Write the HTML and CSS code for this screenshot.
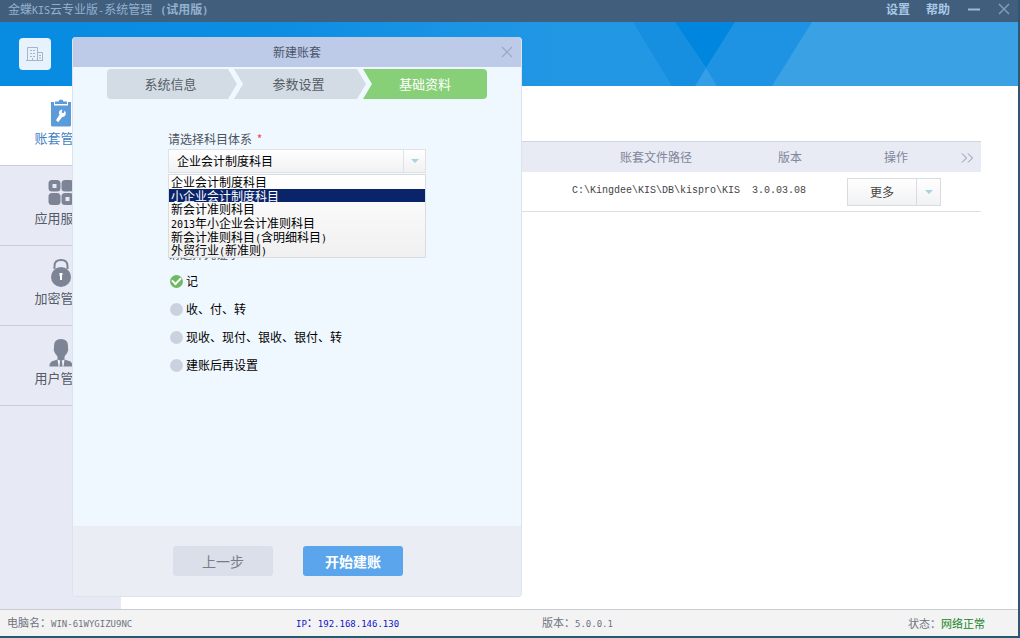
FILE: index.html
```html
<!DOCTYPE html>
<html lang="zh-CN">
<head>
<meta charset="utf-8">
<title>金蝶KIS云专业版-系统管理</title>
<link rel="stylesheet" href="styles.css">
</head>
<body>
<div class="app">
  <header class="titlebar">
    <h1 class="app-title">金蝶<span class="half">KIS</span>云专业版<span class="half">-</span>系统管理</h1>
    <span class="trial"><span class="half">(</span>试用版<span class="half">)</span></span>
    <nav class="window-menu">
      <button class="menu-btn" type="button">设置</button>
      <button class="menu-btn" type="button">帮助</button>
      <button class="win-btn" type="button" aria-label="最小化"><svg width="12" height="12" viewBox="0 0 12 12"><path d="M0 6.5h12" stroke="#9bbbd9" stroke-width="2"/></svg></button>
      <button class="win-btn" type="button" aria-label="关闭"><svg width="12" height="12" viewBox="0 0 12 12"><path d="M1 1l10 10M11 1L1 11" stroke="#7f9cb8" stroke-width="1.5"/></svg></button>
    </nav>
  </header>

  <div class="banner">
    <svg class="banner-art" viewBox="0 0 1018 64" preserveAspectRatio="none" aria-hidden="true">
      <defs><linearGradient id="sky"><stop offset="0" stop-color="#078ce2"/><stop offset=".25" stop-color="#0b8de2"/><stop offset=".55" stop-color="#2297e4"/></linearGradient></defs>
      <rect width="1018" height="64" fill="url(#sky)"/>
      <path d="M633 0H675L717 64H672z" fill="#168fe1"/>
      <path d="M675 0H735L706 46z" fill="#0086df"/>
      <path d="M735 0H812L772 64H717L706 46z" fill="#1e93e3"/>
      <path d="M706 46L717 64H695z" fill="#349fe6"/>
      <path d="M812 0H1018V64H772z" fill="#3aa1e5"/>
    </svg>
    <div class="logo">
      <svg width="18" height="16" viewBox="0 0 18 16" fill="none" stroke="#a3b4cb"><path d="M1.500 14.500V1.500h10v13M11.500 6.500h5v8M0 14.500h17"/><path d="M4 4.500h2m1 0h2M4 7.500h2m1 0h2M4 10.500h2m1 0h2M13 9.500h2M13 12h2M6.500 12v3"/></svg>
    </div>
  </div>

  <div class="workspace">
    <nav class="sidebar">
      <a class="side-item active" href="#accounts">
        <svg width="22" height="28" viewBox="0 0 22 28"><path d="M1 3H4v3.500h14V3h3v23q0 1.500-1.500 1.500H2.500Q1 27.500 1 26z" fill="#5b9bd9"/><path d="M5 5V2.500h3.500Q9 .5 11 .5t2.500 2H17V5z" fill="#5b9bd9"/><path d="M14.800 11.500l-1.300 2.800-2-.8.900-3c-2.900.2-4.200 2.800-2.900 5L6 21.200l2.200 2 4-5.200c3 .2 4.800-3.200 2.600-6.500z" fill="#fff"/></svg>
        <span>账套管理</span>
      </a>
      <a class="side-item" href="#services">
        <svg width="26" height="28" viewBox="0 0 26 28" fill="#7d8496"><path fill-rule="evenodd" d="M4 1h5q3.500 0 3.500 3.500V9q0 3.500-3.500 3.500H4Q.5 12.500.5 9V4.500Q.5 1 4 1zM4.500 5v4H8.500V5z"/><rect x="13.500" y="1" width="12" height="11.500" rx="3.500"/><rect x=".5" y="14" width="12" height="12" rx="3.500"/><path fill-rule="evenodd" d="M17 14h5q3.500 0 3.500 3.500V22.500q0 3.500-3.500 3.500h-5q-3.500 0-3.500-3.500v-5q0-3.500 3.500-3.500zM17.500 18v4h4v-4z"/></svg>
        <span>应用服务</span>
      </a>
      <a class="side-item" href="#encryption">
        <svg width="22" height="28" viewBox="0 0 22 28"><path d="M4.500 10V7q0-6 6.500-6t6.500 6v3" fill="none" stroke="#7d8496" stroke-width="2"/><circle cx="11" cy="18" r="10" fill="#7d8496"/><path d="M9.500 14h3v2h-.5v5h-2v-4h-.5z" fill="#fff"/></svg>
        <span>加密管理</span>
      </a>
      <a class="side-item" href="#users">
        <svg width="24" height="28" viewBox="0 0 24 28"><path d="M12 0q7 0 7 7v2.500q1 1-.5 3.500-.5 2-2 3l-1 2v2.500l6 2Q23.500 24 23.500 27.500H.5Q.5 24 2.500 22.500l6-2V18l-1-2q-1.500-1-2-3Q4 10.500 5 9.500V7Q5 0 12 0z" fill="#7d8496"/><path d="M8.500 20.500L12 22l3.500-1.500-1 7h-5z" fill="#f2f4fa"/><path d="M11 22h2l.5 5.500h-3z" fill="#7d8496"/></svg>
        <span>用户管理</span>
      </a>
    </nav>
    <main class="content">
      <table class="accounts">
        <colgroup><col><col class="c-path"><col class="c-version"><col class="c-action"><col class="c-next"></colgroup>
        <thead>
          <tr><th></th><th>账套文件路径</th><th>版本</th><th>操作</th><th><button class="next" type="button" aria-label="更多列"><svg width="12" height="10" viewBox="0 0 12 10" fill="none" stroke="#8990a6"><path d="M1 .5L5.500 5 1 9.500M7 .5L11.500 5 7 9.500"/></svg></button></th></tr>
        </thead>
        <tbody>
          <tr><td></td><td class="mono">C:\Kingdee\KIS\DB\kispro\KIS</td><td class="mono version">3.0.03.08</td>
          <td><div class="split"><button class="split-main" type="button">更多</button><button class="split-arrow" type="button" aria-label="展开"><i class="caret"></i></button></div></td><td></td></tr>
        </tbody>
      </table>
    </main>
  </div>

  <footer class="status">
    <span>电脑名：<span class="mono-s">WIN-61WYGIZU9NC</span></span>
    <span class="ip"><span class="mono-s">IP</span>：<span class="mono-s">192.168.146.130</span></span>
    <span>版本：<span class="mono-s">5.0.0.1</span></span>
    <span class="net">状态：<b>网络正常</b></span>
  </footer>

  <section class="dialog" role="dialog" aria-labelledby="dlg-title">
    <header class="dialog-head">
      <h2 id="dlg-title">新建账套</h2>
      <button class="dialog-close" type="button" aria-label="关闭"><svg width="12" height="12" viewBox="0 0 12 12"><path d="M1 1l10 10M11 1L1 11" stroke="#98a8cc" stroke-width="1.2"/></svg></button>
    </header>
    <div class="dialog-body">
      <ol class="steps">
        <li class="step first">系统信息</li>
        <li class="step middle">参数设置</li>
        <li class="step current">基础资料</li>
      </ol>
      <form class="form">
        <label class="field-label" for="subject">请选择科目体系 <span class="required">*</span></label>
        <div class="combo">
          <select id="subject"><option>企业会计制度科目</option></select>
          <span class="combo-arrow"><i class="caret"></i></span>
          <ul class="options" role="listbox" aria-label="科目体系">
            <li role="option">企业会计制度科目</li>
            <li role="option" class="selected" aria-selected="true">小企业会计制度科目</li>
            <li role="option">新会计准则科目</li>
            <li role="option"><span class="half">2013</span>年小企业会计准则科目</li>
            <li role="option">新会计准则科目<span class="half">(</span>含明细科目<span class="half">)</span></li>
            <li role="option">外贸行业<span class="half">(</span>新准则<span class="half">)</span></li>
          </ul>
        </div>
        <fieldset class="vouchers">
          <legend>请选择凭证字</legend>
          <label><input type="radio" name="voucher" checked>记</label>
          <label><input type="radio" name="voucher">收、付、转</label>
          <label><input type="radio" name="voucher">现收、现付、银收、银付、转</label>
          <label><input type="radio" name="voucher">建账后再设置</label>
        </fieldset>
      </form>
    </div>
    <footer class="dialog-foot">
      <button class="btn" type="button">上一步</button>
      <button class="btn primary" type="button">开始建账</button>
    </footer>
  </section>
</div>
</body>
</html>
```
FILE: styles.css
```css
* { box-sizing: border-box; }
body, h1, h2, ol, ul, fieldset, legend { margin: 0; padding: 0; }
body {
  font: 12px/16px "Noto Sans CJK SC", sans-serif;
  color: #444;
}
button { font: inherit; color: inherit; border: 0; padding: 0; background: none; cursor: pointer; }
svg { display: block; }
ol, ul { list-style: none; }
.half { font-family: "DejaVu Sans Mono", monospace; font-size: 10px; }
.mono { font-family: "Liberation Mono", monospace; font-size: 10px; }
.mono-s { font-family: "DejaVu Sans Mono", monospace; font-size: 9px; }

.app {
  position: relative;
  display: flex;
  flex-direction: column;
  min-height: 100vh;
  background: #fff;
  border-right: 2px solid #2c5873;
  border-bottom: 2px solid #235a70;
}

.titlebar {
  display: flex;
  align-items: center;
  height: 22px;
  padding: 0 8px;
  background: #415f7d;
  color: #91b0ce;
}
.app-title { font-size: 12px; font-weight: 400; line-height: 20px; padding-bottom: 2px; }
.trial { margin-left: 8px; font-weight: 700; line-height: 20px; padding-bottom: 2px; }
.window-menu { display: flex; align-items: center; gap: 16px; margin-left: auto; padding-bottom: 4px; }
.menu-btn { color: #a9c9e8; font-weight: 700; }
.win-btn { margin-left: 2px; }

.banner { position: relative; height: 64px; padding: 16px 19px; }
.banner-art { position: absolute; inset: 0; width: 100%; height: 100%; }
.logo {
  position: relative;
  display: flex;
  align-items: center;
  justify-content: center;
  width: 32px;
  height: 32px;
  border-radius: 4px;
  background: #e8f2fc;
}

.workspace { display: flex; flex: 1; }
.sidebar { width: 121px; background: #e7eaf4; }
.side-item {
  display: flex;
  flex-direction: column;
  align-items: center;
  gap: 1px;
  height: 80px;
  padding-top: 13px;
  border-bottom: 1px solid #c9cdd9;
  font-size: 13px;
  line-height: 20px;
  color: #555b6a;
  text-decoration: none;
}
.side-item.active { background: #fff; color: #4583c4; }

.content { flex: 1; padding: 55px 37px 0 20px; }
.accounts { width: 100%; table-layout: fixed; border-collapse: collapse; }
.c-path { width: 170px; }
.c-version { width: 98px; }
.c-action { width: 114px; }
.c-next { width: 28px; }
.accounts th {
  height: 30px;
  padding: 0;
  background: #e8eaf4;
  border-top: 1px solid #d0d4df;
  font-weight: 400;
  color: #80869a;
}
.accounts td { height: 40px; padding: 0; border-bottom: 1px solid #dcdfe6; text-align: center; }
.accounts .version { padding-left: 11px; text-align: left; }
.next { display: inline-block; vertical-align: middle; }
.split {
  display: flex;
  width: 94px;
  height: 28px;
  margin: 1px auto 0 8px;
  border: 1px solid #d9dcdf;
  background: linear-gradient(#fff, #f1f2f3);
}
.split-main { width: 68px; }
.split-arrow { display: grid; place-items: center; width: 24px; border-left: 1px solid #d9dcdf; }
.caret {
  border: 4px solid transparent;
  border-top: 4px solid #a4d5df;
  border-bottom: 0;
}

.status {
  display: grid;
  grid-template-columns: 289fr 246fr 365fr 78fr;
  align-items: center;
  height: 27px;
  padding: 0 33px 0 7px;
  border-top: 1px solid #c9ccd3;
  background: #f3f3f4;
  font-size: 11px;
  color: #6f7480;
  white-space: nowrap;
}
.ip { color: #1414c8; }
.net { text-align: right; }
.net b { font-weight: 400; color: #12851c; }

.dialog {
  position: absolute;
  left: 72px;
  top: 37px;
  display: flex;
  flex-direction: column;
  width: 450px;
  min-height: 560px;
  border: 1px solid #dbe3ee;
  border-top: 0;
  border-radius: 4px;
  background: #f0f8ff;
  overflow: hidden;
}
.dialog-head {
  position: relative;
  height: 30px;
  background: #bdcae8;
  text-align: center;
}
.dialog-head h2 { font-size: 12px; font-weight: 400; line-height: 30px; color: #4b5568; }
.dialog-close { position: absolute; right: 8px; top: 9px; }
.dialog-body { flex: 1; padding: 2px 34px 0; }

.steps { display: flex; border-radius: 4px; overflow: hidden; }
.step {
  margin-left: -3px;
  background: #d3dce5;
  clip-path: polygon(0 0, calc(100% - 9px) 0, 100% 50%, calc(100% - 9px) 100%, 0 100%, 9px 50%);
  font-size: 13px;
  line-height: 30px;
  text-align: center;
  color: #555c66;
}
.step.first { flex: 129; margin-left: 0; padding-right: 3px; clip-path: polygon(0 0, calc(100% - 9px) 0, 100% 50%, calc(100% - 9px) 100%, 0 100%); }
.step.middle { flex: 131; padding-right: 3px; }
.step.current { flex: 126; background: #87d078; color: #fff; clip-path: polygon(0 0, 100% 0, 100% 100%, 0 100%, 9px 50%); }

.form { width: 258px; margin: 31px 0 0 61px; }
.field-label { display: block; padding-bottom: 1px; line-height: 18px; color: #4d5360; }
.required { margin-left: 2px; color: #f0475a; }
.combo { position: relative; display: flex; height: 24px; border: 1px solid #dfe3e8; background: linear-gradient(#fff, #f1f1f2); }
.combo select {
  appearance: none;
  flex: 1;
  padding: 0 8px;
  border: 0;
  background: none;
  font: inherit;
  color: #000;
}
.combo-arrow { display: grid; place-items: center; width: 22px; border-left: 1px solid #dfe3e8; }
.options {
  position: absolute;
  z-index: 1;
  left: -1px;
  right: -1px;
  top: 24px;
  display: grid;
  grid-template-rows: repeat(6, 1fr);
  height: 84px;
  border: 1px solid #d9dde2;
  background: linear-gradient(#fff, #f0f0f1);
  color: #000;
}
.options li { min-height: 0; padding-left: 2px; line-height: 14px; }
.options .selected { background: #0a246a; color: #fff; }

.vouchers { padding-top: 72px; border: 0; }
.vouchers legend { float: left; width: 100%; margin-bottom: 4px; line-height: 18px; color: #4d5360; }
.vouchers label { display: flex; clear: both; align-items: center; gap: 3px; height: 28px; color: #000; }
.vouchers input {
  appearance: none;
  width: 13px;
  height: 13px;
  margin: 0 0 0 2px;
  border-radius: 50%;
  background: #ccd1df;
}
.vouchers input:checked {
  display: grid;
  place-items: center;
  background: #6fb866;
}
.vouchers input:checked::after {
  content: "";
  width: 7px;
  height: 4px;
  margin-bottom: 2px;
  border: solid #fff;
  border-width: 0 0 2px 2px;
  transform: rotate(-45deg);
}

.dialog-foot {
  display: flex;
  justify-content: center;
  gap: 30px;
  height: 70px;
  padding: 20px 18px 0 0;
  background: #eaeef4;
}
.btn { width: 100px; height: 30px; border-radius: 3px; background: #dadfe9; font-size: 14px; color: #777d88; }
.btn.primary { background: #5ba5ec; color: #fff; font-weight: 700; }
```
